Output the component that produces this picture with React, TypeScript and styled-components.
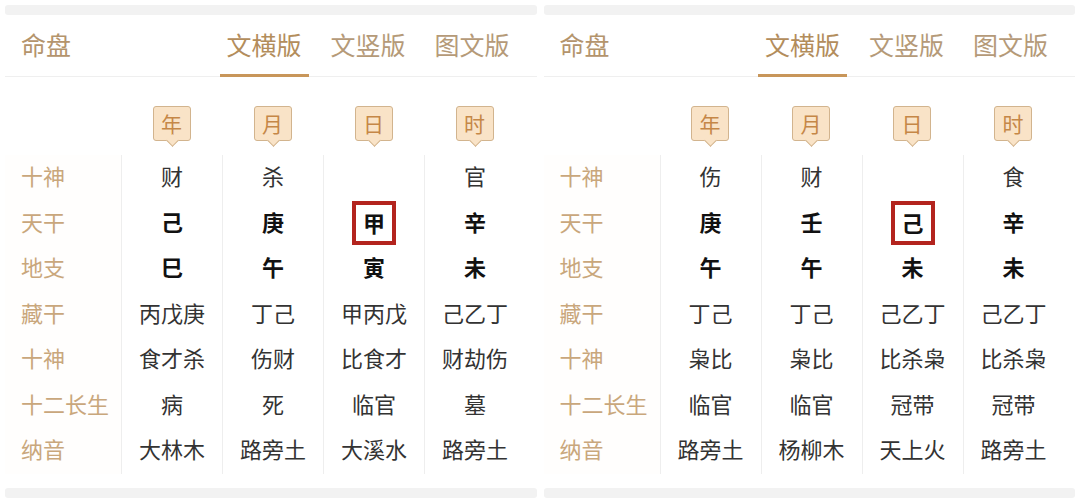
import React from "react";
import styled, { createGlobalStyle } from "styled-components";

const Global = createGlobalStyle`
  html, body { margin: 0; padding: 0; background: #ffffff; }
  body { font-family: "Noto Sans CJK SC", "Noto Sans", sans-serif; }
`;

const Page = styled.div`
  display: flex;
  gap: 7px;
  padding: 5px 5px 0 5px;
  width: 1080px;
  height: 499px;
  box-sizing: border-box;
  overflow: hidden;
`;

const Panel = styled.section`
  flex: 1;
  display: flex;
  flex-direction: column;
  background: #fff;
`;

const GreyBar = styled.div`
  height: 10px;
  background: #f2f2f2;
  border-radius: 3px;
`;

const Header = styled.div`
  display: flex;
  align-items: stretch;
  height: 61px;
  border-bottom: 1px solid #efefef;
  padding: 0 20px 0 16px;
`;

const Title = styled.div`
  display: flex;
  align-items: center;
  padding-bottom: 4px;
  font-size: 25px;
  color: #b4946c;
`;

const Tabs = styled.div`
  display: flex;
  gap: 15px;
  margin-left: auto;
`;

const Tab = styled.div<{ $active?: boolean }>`
  position: relative;
  width: 89px;
  display: flex;
  align-items: center;
  justify-content: center;
  padding-bottom: 4px;
  font-size: 25px;
  color: ${(p) => (p.$active ? "#b38d5c" : "#b59a78")};
  &::after {
    content: "";
    position: absolute;
    left: 0;
    right: 0;
    bottom: -1px;
    height: 3px;
    background: ${(p) => (p.$active ? "#c8965a" : "transparent")};
  }
`;

const Grid = styled.div`
  display: grid;
  grid-template-columns: 116px repeat(4, 101px);
`;

const BadgeRow = styled(Grid)`
  padding-top: 29px;
  height: 49px;
`;

const BadgeCell = styled.div`
  display: flex;
  justify-content: center;
  align-items: flex-start;
`;

const Badge = styled.div`
  position: relative;
  width: 38px;
  height: 35px;
  box-sizing: border-box;
  padding-bottom: 2px;
  background: #f9e3c7;
  border: 1px solid #d2b48e;
  border-radius: 3px;
  display: flex;
  align-items: center;
  justify-content: center;
  font-size: 21px;
  color: #c58747;
  &::after {
    content: "";
    position: absolute;
    left: 50%;
    bottom: -5px;
    width: 8px;
    height: 8px;
    margin-left: -4px;
    background: #f9e3c7;
    border-right: 1px solid #d2b48e;
    border-bottom: 1px solid #d2b48e;
    transform: rotate(45deg);
  }
`;

const Table = styled(Grid)`
  grid-auto-flow: column;
  grid-template-rows: repeat(7, 45.5px);
`;

const Label = styled.div`
  display: flex;
  align-items: center;
  padding-left: 16px;
  padding-bottom: 5px;
  font-size: 22px;
  color: #c9a77c;
  background: #fffefd;
`;

const Cell = styled.div<{ $bold?: boolean }>`
  display: flex;
  align-items: center;
  justify-content: center;
  padding-bottom: 5px;
  border-left: 1px solid #eeeeee;
  font-size: 22px;
  font-weight: ${(p) => (p.$bold ? 700 : 400)};
  color: ${(p) => (p.$bold ? "#111111" : "#333333")};
`;

const Marked = styled.span`
  display: inline-flex;
  align-items: center;
  justify-content: center;
  width: 44px;
  height: 44px;
  box-sizing: border-box;
  padding-bottom: 3px;
  margin-top: 5px;
  border: 4px solid #b3241e;
`;

const BottomBar = styled(GreyBar)`
  margin-top: 14px;
`;

const labels = ["十神", "天干", "地支", "藏干", "十神", "十二长生", "纳音"];
const pillars = ["年", "月", "日", "时"];

type Col = string[];

const left: Col[] = [
  ["财", "己", "巳", "丙戊庚", "食才杀", "病", "大林木"],
  ["杀", "庚", "午", "丁己", "伤财", "死", "路旁土"],
  ["", "甲", "寅", "甲丙戊", "比食才", "临官", "大溪水"],
  ["官", "辛", "未", "己乙丁", "财劫伤", "墓", "路旁土"],
];

const right: Col[] = [
  ["伤", "庚", "午", "丁己", "枭比", "临官", "路旁土"],
  ["财", "壬", "午", "丁己", "枭比", "临官", "杨柳木"],
  ["", "己", "未", "己乙丁", "比杀枭", "冠带", "天上火"],
  ["食", "辛", "未", "己乙丁", "比杀枭", "冠带", "路旁土"],
];

function Chart({ cols }: { cols: Col[] }) {
  return (
    <Panel>
      <GreyBar />
      <Header>
        <Title>命盘</Title>
        <Tabs>
          <Tab $active>文横版</Tab>
          <Tab>文竖版</Tab>
          <Tab>图文版</Tab>
        </Tabs>
      </Header>
      <BadgeRow>
        <div />
        {pillars.map((p) => (
          <BadgeCell key={p}>
            <Badge>{p}</Badge>
          </BadgeCell>
        ))}
      </BadgeRow>
      <Table>
        {labels.map((l, i) => (
          <Label key={"l" + i}>{l}</Label>
        ))}
        {cols.map((col, ci) =>
          col.map((v, ri) => (
            <Cell key={ci + "-" + ri} $bold={ri === 1 || ri === 2}>
              {ci === 2 && ri === 1 ? <Marked>{v}</Marked> : v}
            </Cell>
          ))
        )}
      </Table>
      <BottomBar />
    </Panel>
  );
}

export default function App() {
  return (
    <>
      <Global />
      <Page>
        <Chart cols={left} />
        <Chart cols={right} />
      </Page>
    </>
  );
}
